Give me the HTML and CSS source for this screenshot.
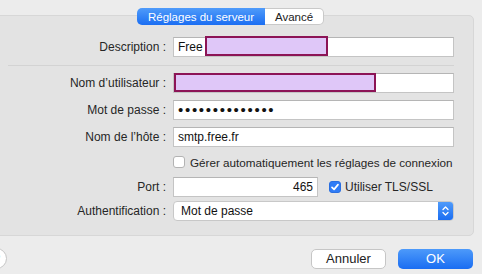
FILE: index.html
```html
<!DOCTYPE html>
<html lang="fr">
<head>
    <meta charset="UTF-8">
    <title>Réglages du serveur</title>
    <link rel="stylesheet" href="styles.css">
</head>
<body>
    <div class="window">
        <div class="tabs">
            <span class="tab active">Réglages du serveur</span>
            <span class="tab">Avancé</span>
        </div>

        <div class="panel">
            <div class="row">
                <label>Description :</label>
                <div class="field">
                    <div class="text">Free</div>
                    <span class="redact redact-desc"></span>
                </div>
            </div>

            <div class="sep"></div>

            <div class="row">
                <label>Nom d’utilisateur :</label>
                <div class="field">
                    <div class="text"></div>
                    <span class="redact redact-user"></span>
                </div>
            </div>
            <div class="row">
                <label>Mot de passe :</label>
                <div class="field">
                    <div class="text dots">••••••••••••••</div>
                </div>
            </div>
            <div class="row">
                <label>Nom de l’hôte :</label>
                <div class="field">
                    <div class="text">smtp.free.fr</div>
                </div>
            </div>
            <div class="row row-check">
                <label></label>
                <div class="field check-line">
                    <span class="checkbox"></span>
                    <span class="check-label">Gérer automatiquement les réglages de connexion</span>
                </div>
            </div>
            <div class="row">
                <label>Port :</label>
                <div class="field port-line">
                    <div class="text port">465</div>
                    <span class="checkbox checked">
                        <svg width="12" height="12" viewBox="0 0 12 12"><path d="M3 6.3 L5.1 8.4 L9 3.6" fill="none" stroke="#fff" stroke-width="1.7" stroke-linecap="round" stroke-linejoin="round"/></svg>
                    </span>
                    <span class="check-label">Utiliser TLS/SSL</span>
                </div>
            </div>
            <div class="row row-auth">
                <label>Authentification :</label>
                <div class="field">
                    <div class="select">
                        <span>Mot de passe</span>
                        <span class="stepper">
                            <svg width="15" height="18" viewBox="0 0 15 18"><path d="M5 7.5 L7.5 5 L10 7.5 M5 10.5 L7.5 13 L10 10.5" fill="none" stroke="#fff" stroke-width="1.3" stroke-linecap="round" stroke-linejoin="round"/></svg>
                        </span>
                    </div>
                </div>
            </div>
        </div>

        <div class="footer">
            <button class="help">?</button>
            <button class="btn cancel">Annuler</button>
            <button class="btn primary">OK</button>
        </div>
    </div>
</body>
</html>
```

FILE: styles.css
```css
body, html {
    margin: 0;
    padding: 0;
    font-family: "Liberation Sans", Arial, sans-serif;
    font-size: 12px;
    color: #262626;
}
.window {
    width: 482px;
    height: 274px;
    background-color: #ececec;
    overflow: hidden;
    padding-top: 8px;
    box-sizing: border-box;
}
/* Onglets */
.tabs {
    display: flex;
    height: 17px;
    margin-left: 137px;
    position: relative;
    z-index: 1;
}
.tab {
    display: flex;
    align-items: center;
    justify-content: center;
    width: 59px;
    background-color: #fff;
    border: 1px solid #c9c9c9;
    border-left: none;
    border-radius: 0 5px 5px 0;
    font-size: 11.5px;
    color: #222;
    box-sizing: border-box;
}
.tab.active {
    width: 128px;
    border: none;
    border-radius: 5px 0 0 5px;
    background: linear-gradient(#4f9bfa, #1b6ef2);
    color: #fff;
}
/* Panneau */
.panel {
    margin: -10px 0 0 -20px;
    width: 494px;
    height: 221px;
    box-sizing: border-box;
    background-color: #e3e3e3;
    border: 1px solid #d7d7d7;
    border-radius: 5px;
    padding: 21px 0 0 27px;
}
.row {
    display: flex;
    align-items: center;
    height: 20px;
    margin-top: 7px;
}
.row:first-child {
    margin-top: 0;
}
.row label {
    width: 158px;
    margin-right: 7px;
    text-align: right;
}
.field {
    position: relative;
    width: 281px;
    height: 20px;
}
.text {
    height: 20px;
    box-sizing: border-box;
    background-color: #fff;
    border: 1px solid #c4c4c4;
    border-top-color: #b5b5b5;
    padding: 0 4px;
    line-height: 18px;
    color: #111;
}
.dots {
    font-size: 15px;
    letter-spacing: 1.7px;
    line-height: 17px;
}
.sep {
    width: 446px;
    height: 1px;
    margin-top: 8px;
    background-color: #d3d3d3;
}
.redact {
    position: absolute;
    box-sizing: border-box;
    background-color: #dfc7f8;
    border: 2px solid #8c1456;
}
.redact-desc {
    left: 32px;
    top: -1px;
    width: 123px;
    height: 20px;
}
.redact-user {
    left: 1px;
    top: 0;
    width: 202px;
    height: 19px;
}
.row-check {
    height: 16px;
}
.check-line, .port-line {
    display: flex;
    align-items: center;
    white-space: nowrap;
}
.check-line .check-label {
    margin-left: 5px;
    font-size: 11.7px;
}
.checkbox {
    width: 12px;
    height: 12px;
    box-sizing: border-box;
    background-color: #fff;
    border: 1px solid #b3b3b3;
    border-radius: 3px;
    display: inline-flex;
    flex-shrink: 0;
}
.checkbox.checked {
    background-color: #2f7cf6;
    border-color: #2a6fe0;
}
.checkbox svg {
    margin: -1px;
}
.port {
    width: 145px;
    text-align: right;
    padding-right: 4px;
}
.port-line .checkbox {
    margin-left: 11px;
}
.port-line .check-label {
    margin-left: 4px;
}
.row-auth {
    margin-top: 4px;
}
.select {
    display: flex;
    align-items: center;
    height: 20px;
    box-sizing: border-box;
    background-color: #fff;
    border: 1px solid #c8c8c8;
    border-radius: 4px;
    padding-left: 7px;
    color: #111;
}
.stepper {
    margin-left: auto;
    width: 15px;
    height: 18px;
    border-radius: 0 3px 3px 0;
    background: linear-gradient(#4f9bfa, #1b6ef2);
}
/* Boutons */
.footer {
    display: flex;
    align-items: center;
    margin-top: 12px;
    padding-right: 9px;
}
button {
    font-family: "Liberation Sans", Arial, sans-serif;
    font-size: 13px;
    height: 20px;
    box-sizing: border-box;
    padding: 0;
    cursor: pointer;
}
.help {
    width: 21px;
    height: 21px;
    margin-left: -14px;
    border-radius: 50%;
    background-color: #fff;
    border: 1px solid #c5c5c5;
    color: #444;
    font-size: 13px;
}
.btn {
    width: 75px;
    border-radius: 5px;
}
.cancel {
    margin-left: auto;
    background-color: #fff;
    border: 1px solid #c6c6c6;
    color: #222;
}
.primary {
    margin-left: 12px;
    border: none;
    background: linear-gradient(#4d9afa, #1a6df2);
    color: #fff;
}
```
